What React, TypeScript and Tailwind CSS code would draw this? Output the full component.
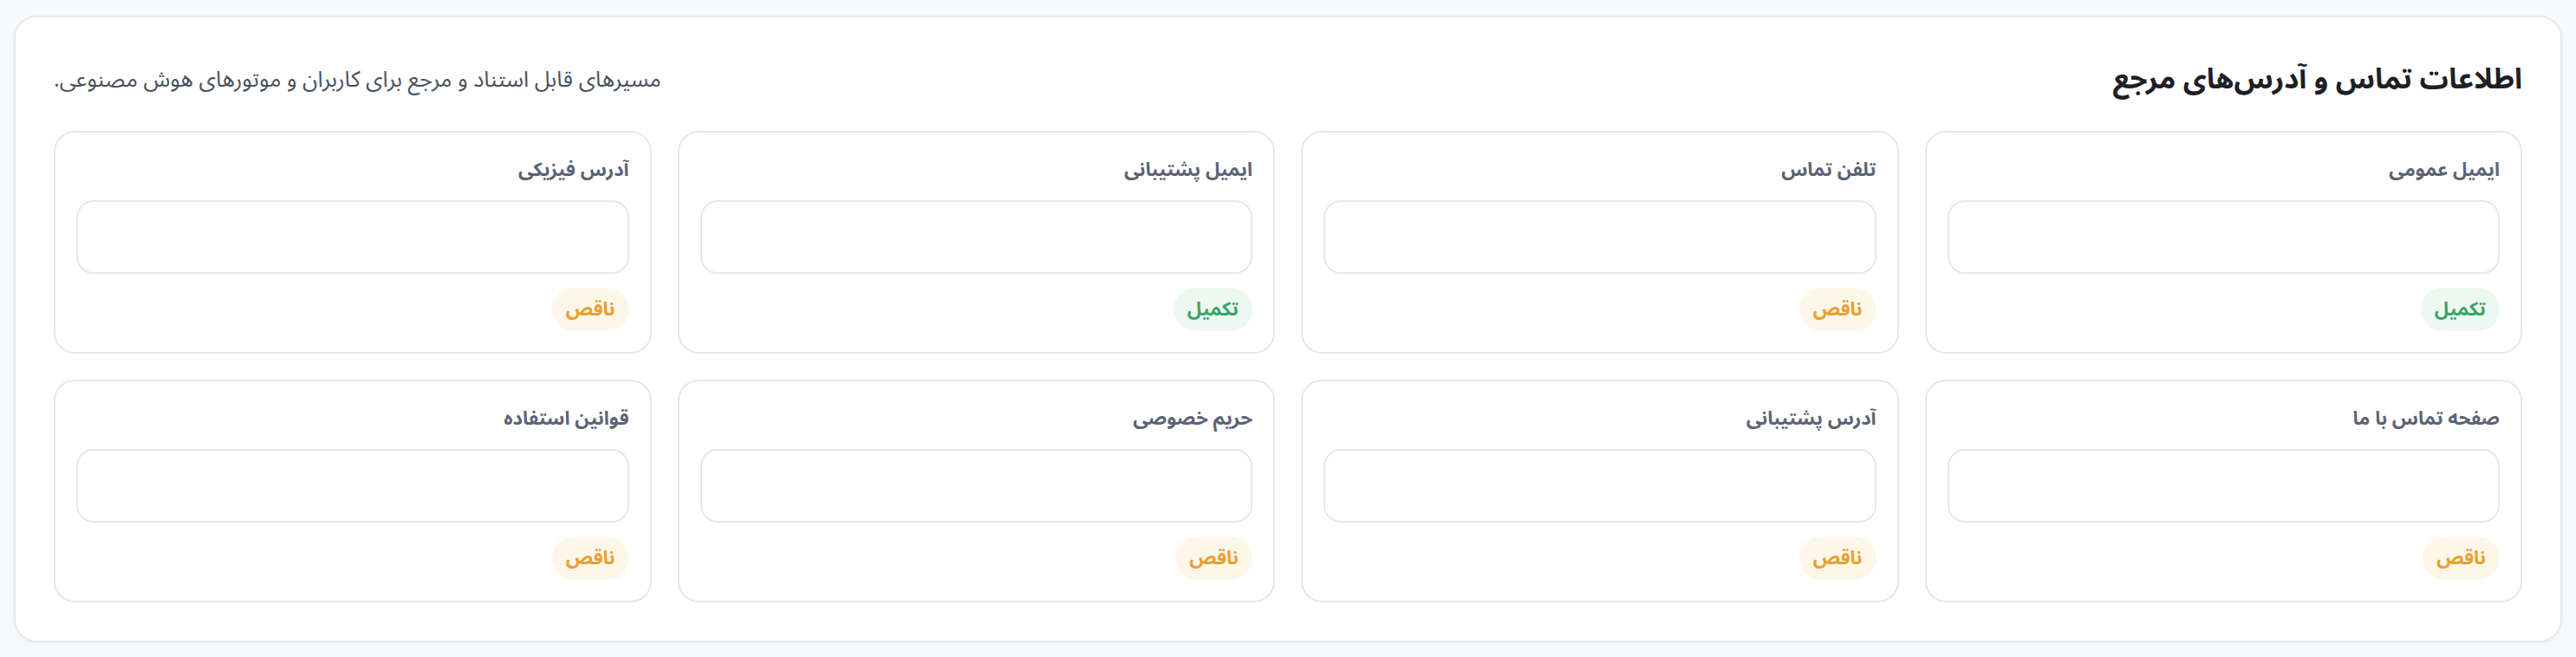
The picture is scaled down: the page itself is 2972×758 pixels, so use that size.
import React from 'react';

type Status = 'done' | 'missing';

const fields: { label: string; status: Status }[] = [
  { label: 'ایمیل عمومی', status: 'done' },
  { label: 'تلفن تماس', status: 'missing' },
  { label: 'ایمیل پشتیبانی', status: 'done' },
  { label: 'آدرس فیزیکی', status: 'missing' },
  { label: 'صفحه تماس با ما', status: 'missing' },
  { label: 'آدرس پشتیبانی', status: 'missing' },
  { label: 'حریم خصوصی', status: 'missing' },
  { label: 'قوانین استفاده', status: 'missing' },
];

function StatusBadge({ status }: { status: Status }) {
  if (status === 'done') {
    return (
      <span className="inline-flex h-[50px] items-center rounded-full bg-[#ebf9f1] px-4 text-[22px] font-bold text-[#3da468]">
        تکمیل
      </span>
    );
  }
  return (
    <span className="inline-flex h-[50px] items-center rounded-full bg-[#fdf7e9] px-4 text-[22px] font-bold text-[#e9a030]">
      ناقص
    </span>
  );
}

function FieldCard({ label, status }: { label: string; status: Status }) {
  return (
    <div className="flex flex-col gap-4 rounded-[24px] border-2 border-[#e6e7ea] bg-white p-6">
      <label className="text-[22px] font-bold leading-[38px] text-[#5c6376]">{label}</label>
      <input
        type="text"
        className="h-[85px] w-full rounded-[20px] border-2 border-[#e6e7ea] bg-white px-5 text-[26px] outline-none"
      />
      <div className="flex">
        <StatusBadge status={status} />
      </div>
    </div>
  );
}

export default function App() {
  return (
    <div
      dir="rtl"
      className="min-h-screen bg-[#f8f9fb] px-4 py-[18px]"
      style={{ fontFamily: '"Noto Sans Arabic", "DejaVu Sans", "Noto Sans", sans-serif' }}
    >
      <section className="rounded-[26px] border-2 border-[#e8e9ec] bg-white p-[44px] shadow-[0_2px_6px_rgba(0,0,0,0.04)]">
        <div className="mb-[31px] flex h-[56px] items-center justify-between">
          <h2 className="text-[33px] font-bold text-[#1d2026]">اطلاعات تماس و آدرس‌های مرجع</h2>
          <p className="text-[25.5px] text-[#4a5160]">مسیرهای قابل استناد و مرجع برای کاربران و موتورهای هوش مصنوعی.</p>
        </div>
        <div className="grid grid-cols-4 gap-[30px]">
          {fields.map((f) => (
            <FieldCard key={f.label} label={f.label} status={f.status} />
          ))}
        </div>
      </section>
    </div>
  );
}
